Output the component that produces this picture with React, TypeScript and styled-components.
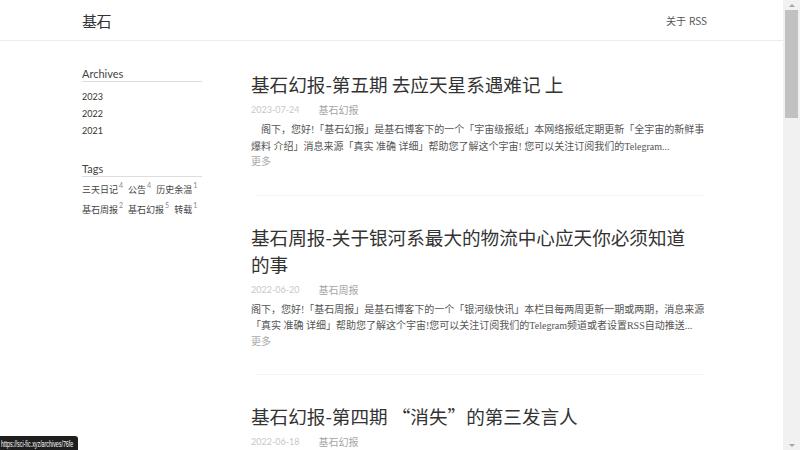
import styled, { createGlobalStyle } from "styled-components";

const GlobalStyle = createGlobalStyle`
  html, body {
    margin: 0;
    padding: 0;
    height: 100%;
    overflow: hidden;
    background: #fff;
  }
  #root {
    height: 100%;
  }
  a {
    text-decoration: none;
    color: inherit;
  }
`;

const Page = styled.div`
  display: flex;
  height: 450px;
  width: 800px;
`;

const Viewport = styled.div`
  flex: 1;
  overflow: hidden;
  font-family: "Noto Sans CJK SC", "Noto Sans", sans-serif;
  color: #333;
`;

const Header = styled.header`
  height: 40px;
  border-bottom: 1px solid #ececec;
  display: flex;
  align-items: center;
  justify-content: space-between;
  padding: 0 76px 0 82px;
`;

const Logo = styled.a`
  font-size: 15px;
  color: #333;
  letter-spacing: -0.5px;
`;

const HeaderNav = styled.nav`
  font-size: 10px;
  color: #555;
  display: flex;
  gap: 3px;
  font-family: "Noto Sans CJK SC", "Liberation Sans", sans-serif;
`;

const Body = styled.div`
  display: flex;
  gap: 49px;
  margin-left: 82px;
  width: 625px;
`;

const Sidebar = styled.aside`
  width: 120px;
  flex-shrink: 0;
  padding-top: 26px;
`;

const WidgetTitle = styled.h3<{ gapTop?: number }>`
  margin: ${({ gapTop }) => gapTop ?? 0}px 0 0;
  font-family: Lato, "Noto Sans", sans-serif;
  font-weight: 400;
  font-size: 11px;
  line-height: 14px;
  color: #444;
  border-bottom: 1px solid #ddd;
`;

const YearList = styled.ul`
  list-style: none;
  margin: 6px 0 0;
  padding: 0;
`;

const Year = styled.li`
  font-family: Lato, "Noto Sans", sans-serif;
  font-size: 9px;
  line-height: 17px;
  color: #333;
`;

const TagCloud = styled.div`
  margin-top: 3px;
  display: flex;
  flex-wrap: wrap;
  column-gap: 5px;
  width: 120px;
`;

const Tag = styled.a`
  font-size: 9px;
  line-height: 20px;
  color: #444;
  white-space: nowrap;

  sup {
    font-size: 7px;
    color: #888;
    vertical-align: 5px;
    line-height: 0;
    margin-left: 1px;
    font-family: Lato, sans-serif;
  }
`;

const Main = styled.main`
  width: 456px;
  padding-top: 2px;
`;

const Post = styled.article<{ last?: boolean }>`
  padding: 27px 0 28.5px;
  border-bottom: ${({ last }) => (last ? "none" : "1px solid #f4f4f4")};
  margin: 0 2px 0 4px;
`;

const PostTitle = styled.h2`
  margin: 0 0 0 -4px;
  font-size: 18.6px;
  line-height: 27px;
  font-weight: 400;
  color: #333;
  max-width: 446px;
`;

const Meta = styled.div`
  margin: 5px 0 0 -4px;
  display: flex;
  gap: 19px;
  font-size: 10px;
  line-height: 16px;
`;

const PostDate = styled.span`
  font-family: Lato, "Noto Sans", sans-serif;
  font-size: 9px;
  color: #c8c8c8;
`;

const Category = styled.a`
  color: #a5a5a5;
`;

const Excerpt = styled.p<{ indent?: boolean }>`
  margin: 4px -2px 0 -4px;
  font-family: "Liberation Serif", "Noto Sans CJK SC", serif;
  font-size: 10px;
  line-height: 16.5px;
  color: #555;
  text-indent: ${({ indent }) => (indent ? "10px" : "0")};
`;

const More = styled.a`
  display: block;
  margin-left: -4px;
  font-size: 10px;
  line-height: 11px;
  color: #aaa;
`;

const Scrollbar = styled.div`
  width: 17px;
  background: #f1f1f1;
  display: flex;
  flex-direction: column;
  align-items: center;
`;

const Arrow = styled.div<{ down?: boolean }>`
  height: 10px;
  width: 17px;
  display: flex;
  align-items: center;
  justify-content: center;
  margin-top: ${({ down }) => (down ? "auto" : "0")};

  &::before {
    content: "";
    border-left: 3px solid transparent;
    border-right: 3px solid transparent;
    ${({ down }) =>
      down ? "border-top: 3px solid #a3a3a3;" : "border-bottom: 3px solid #a3a3a3;"}
  }
`;

const Thumb = styled.div`
  width: 13px;
  height: 108px;
  background: #c1c1c1;
`;

const StatusBar = styled.div`
  position: fixed;
  left: 0;
  bottom: 0;
  height: 14px;
  width: 78px;
  background: #1e1e1e;
  border-top-right-radius: 3px;
  color: #fff;
  overflow: hidden;
  display: flex;
  align-items: center;

  span {
    font-family: "Liberation Sans Narrow", "Liberation Sans", sans-serif;
    font-size: 9.5px;
    white-space: nowrap;
    padding-left: 2px;
    transform: scaleX(0.56);
    transform-origin: left center;
  }
`;

const posts = [
  {
    title: "基石幻报-第五期 去应天星系遇难记 上",
    date: "2023-07-24",
    category: "基石幻报",
    indent: true,
    excerpt:
      "阁下，您好!「基石幻报」是基石博客下的一个「宇宙级报纸」本网络报纸定期更新「全宇宙的新鲜事爆料 介绍」消息来源「真实 准确 详细」帮助您了解这个宇宙! 您可以关注订阅我们的Telegram...",
  },
  {
    title: "基石周报-关于银河系最大的物流中心应天你必须知道的事",
    date: "2022-06-20",
    category: "基石周报",
    indent: false,
    excerpt:
      "阁下，您好!「基石周报」是基石博客下的一个「银河级快讯」本栏目每两周更新一期或两期，消息来源「真实 准确 详细」帮助您了解这个宇宙!您可以关注订阅我们的Telegram频道或者设置RSS自动推送...",
  },
];

const tags = [
  { name: "三天日记", count: 4 },
  { name: "公告", count: 4 },
  { name: "历史余温", count: 1 },
  { name: "基石周报", count: 2 },
  { name: "基石幻报", count: 5 },
  { name: "转载", count: 1 },
];

export default function App() {
  return (
    <>
      <GlobalStyle />
      <Page>
        <Viewport>
          <Header>
            <Logo href="/">基石</Logo>
            <HeaderNav>
              <a href="/about">关于</a>
              <a href="/rss">RSS</a>
            </HeaderNav>
          </Header>
          <Body>
            <Sidebar>
              <WidgetTitle>Archives</WidgetTitle>
              <YearList>
                <Year>2023</Year>
                <Year>2022</Year>
                <Year>2021</Year>
              </YearList>
              <WidgetTitle gapTop={23}>Tags</WidgetTitle>
              <TagCloud>
                {tags.map((t) => (
                  <Tag key={t.name} href="#">
                    {t.name}
                    <sup>{t.count}</sup>
                  </Tag>
                ))}
              </TagCloud>
            </Sidebar>
            <Main>
              {posts.map((p) => (
                <Post key={p.title}>
                  <PostTitle>{p.title}</PostTitle>
                  <Meta>
                    <PostDate>{p.date}</PostDate>
                    <Category href="#">{p.category}</Category>
                  </Meta>
                  <Excerpt indent={p.indent}>{p.excerpt}</Excerpt>
                  <More href="#">更多</More>
                </Post>
              ))}
              <Post last>
                <PostTitle>基石幻报-第四期 “消失”的第三发言人</PostTitle>
                <Meta>
                  <PostDate>2022-06-18</PostDate>
                  <Category href="#">基石幻报</Category>
                </Meta>
              </Post>
            </Main>
          </Body>
        </Viewport>
        <Scrollbar>
          <Arrow />
          <Thumb />
          <Arrow down />
        </Scrollbar>
      </Page>
      <StatusBar>
        <span>https://sci-fic.xyz/archives/76fe</span>
      </StatusBar>
    </>
  );
}
